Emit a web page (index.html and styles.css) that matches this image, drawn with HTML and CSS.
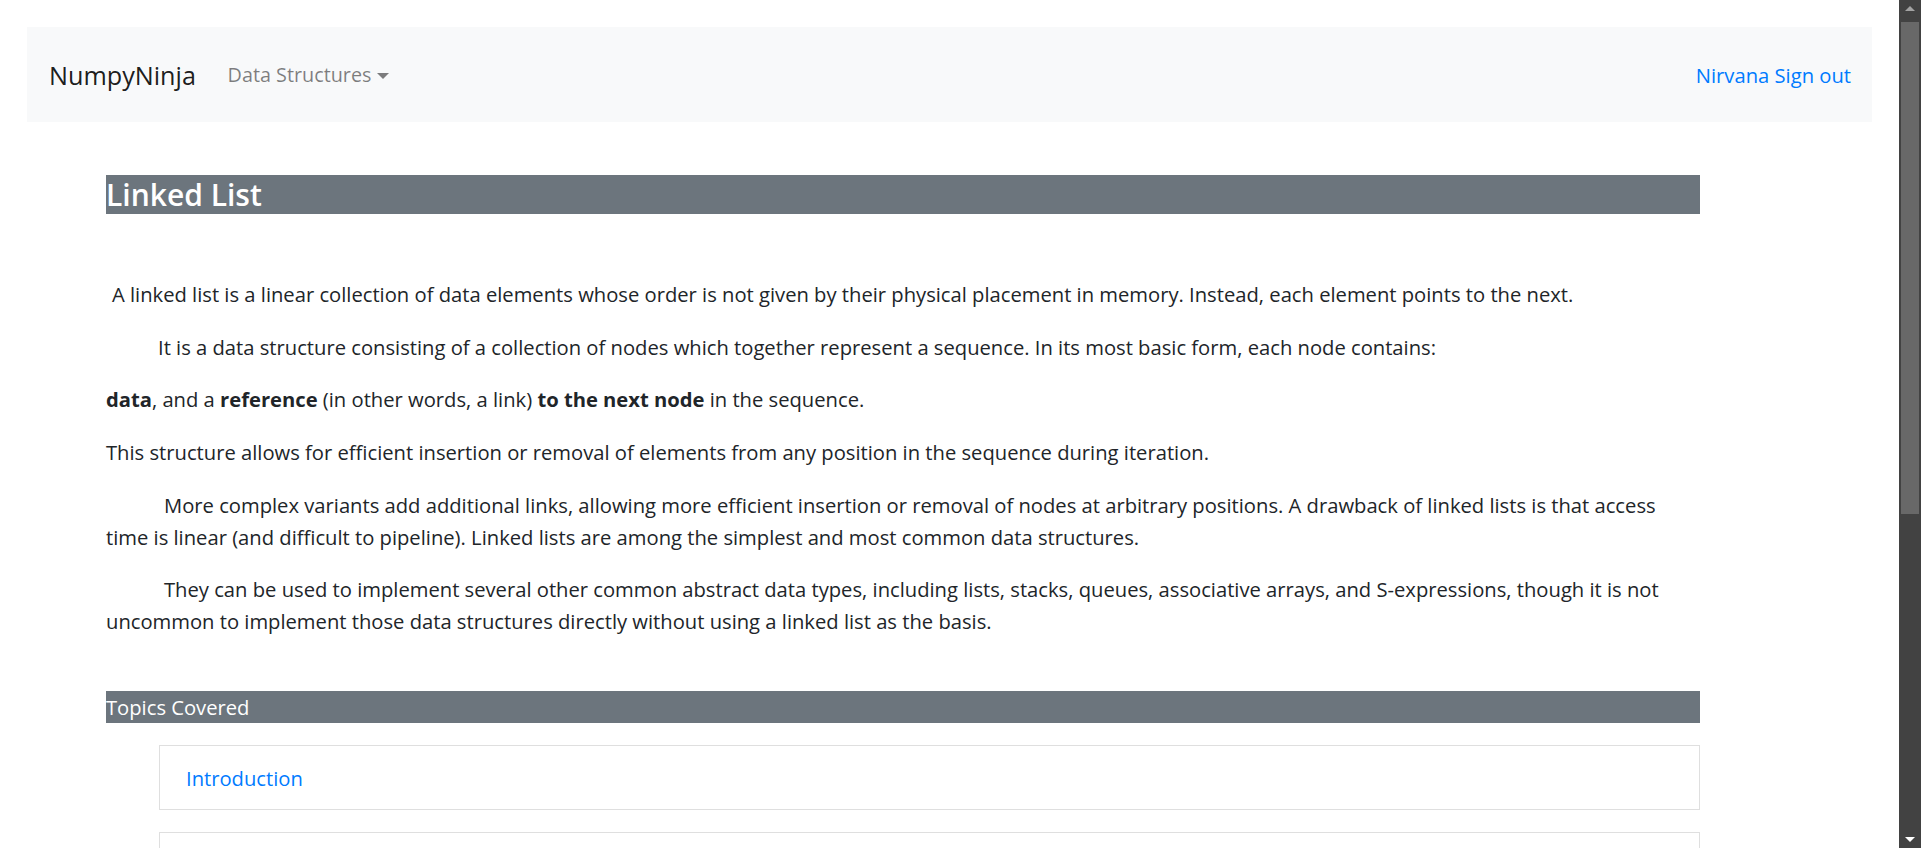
FILE: index.html
```html
<!DOCTYPE html>
<html lang="en">
<head>
<meta charset="utf-8">
<title>Linked List</title>
<link rel="stylesheet" href="styles.css">
</head>
<body>
<div class="page">
  <div class="main">
    <nav class="navbar">
      <a class="brand" href="#">NumpyNinja</a>
      <a class="nav-link" href="#">Data Structures<span class="caret"></span></a>
      <span class="spacer"></span>
      <a class="user-link" href="#">Nirvana Sign out</a>
    </nav>
    <div class="content">
      <h4 class="title">Linked List</h4>
      <p class="indent-s">A linked list is a linear collection of data elements whose order is not given by their physical placement in memory. Instead, each element points to the next.</p>
      <p class="indent-m">It is a data structure consisting of a collection of nodes which together represent a sequence. In its most basic form, each node contains:</p>
      <p><strong>data</strong>, and a <strong>reference</strong> (in other words, a link) <strong>to the next node</strong> in the sequence.</p>
      <p>This structure allows for efficient insertion or removal of elements from any position in the sequence during iteration.</p>
      <p class="indent-l">More complex variants add additional links, allowing more efficient insertion or removal of nodes at arbitrary positions. A drawback of linked lists is that access time is linear (and difficult to pipeline). Linked lists are among the simplest and most common data structures.</p>
      <p class="indent-l">They can be used to implement several other common abstract data types, including lists, stacks, queues, associative arrays, and S-expressions, though it is not uncommon to implement those data structures directly without using a linked list as the basis.</p>
      <div class="topics">Topics Covered</div>
      <ul class="topic-list">
        <li class="topic-item"><a href="#">Introduction</a></li>
        <li class="topic-item"><a href="#">Creating Linked LIst</a></li>
        <li class="topic-item"><a href="#">Types of Linked List</a></li>
        <li class="topic-item"><a href="#">Implement Linked List in Python</a></li>
      </ul>
    </div>
  </div>
  <div class="scrollbar">
    <span class="arrow arrow-up"></span>
    <div class="track"><div class="thumb"></div></div>
    <span class="arrow arrow-down"></span>
  </div>
</div>
</body>
</html>
```

FILE: styles.css
```css
html, body {
  margin: 0;
  padding: 0;
  height: 100%;
  overflow: hidden;
}

body {
  font-family: "Open Sans", "Noto Sans", sans-serif;
  font-size: 20.2px;
  line-height: 32px;
  color: #212529;
  background: #fff;
}

a {
  text-decoration: none;
}

.page {
  display: flex;
  height: 848px;
  overflow: hidden;
}

.main {
  flex: 1;
  min-width: 0;
  padding: 27px 27px 0 27px;
}

.navbar {
  display: flex;
  align-items: center;
  height: 95px;
  background: #f8f9fa;
  padding: 0 21px 0 22px;
}

.brand {
  font-size: 25.2px;
  line-height: 40px;
  color: rgba(0, 0, 0, 0.9);
  margin-right: 21px;
}

.nav-link {
  display: flex;
  align-items: center;
  color: rgba(0, 0, 0, 0.5);
  font-size: 19.8px;
  padding: 0 10.67px;
}

.caret {
  display: inline-block;
  width: 0;
  height: 0;
  margin-left: 5.4px;
  border-top: 6.4px solid rgba(0, 0, 0, 0.5);
  border-left: 6.4px solid transparent;
  border-right: 6.4px solid transparent;
  margin-top: 2px;
}

.spacer {
  flex: 1;
}

.user-link {
  color: #007bff;
}

.content {
  padding: 0 172px 0 79px;
}

.title {
  margin: 53px 0 64px 0;
  font-size: 30px;
  line-height: 39px;
  font-weight: 600;
  color: #fff;
  background: #6c757d;
}

.content p {
  margin: 0 0 20.7px 0;
}

.indent-s { text-indent: 6px; }
.indent-m { text-indent: 52px; }
.indent-l { text-indent: 58px; }

.topics {
  margin-top: 54px;
  background: #6c757d;
  color: #fff;
  line-height: 32px;
}

.topic-list {
  list-style: none;
  margin: 22px 0 0 53px;
  padding: 0;
  display: flex;
  flex-direction: column;
  gap: 22px;
}

.topic-item {
  border: 1px solid #dfdfdf;
  padding: 15.5px 26px;
}

.topic-item a {
  color: #007bff;
}

.scrollbar {
  width: 22px;
  flex: none;
  background: #424242;
  display: flex;
  flex-direction: column;
  align-items: center;
}

.arrow {
  display: block;
  width: 0;
  height: 0;
  border-left: 5px solid transparent;
  border-right: 5px solid transparent;
}

.arrow-up {
  margin-top: 6px;
  border-bottom: 5px solid #a3a3a3;
}

.arrow-down {
  margin-bottom: 6px;
  border-top: 5px solid #ffffff;
}

.track {
  flex: 1;
  width: 100%;
  padding: 11px 2px 0 2px;
  box-sizing: border-box;
}

.thumb {
  height: 492px;
  background: #686868;
}
```
